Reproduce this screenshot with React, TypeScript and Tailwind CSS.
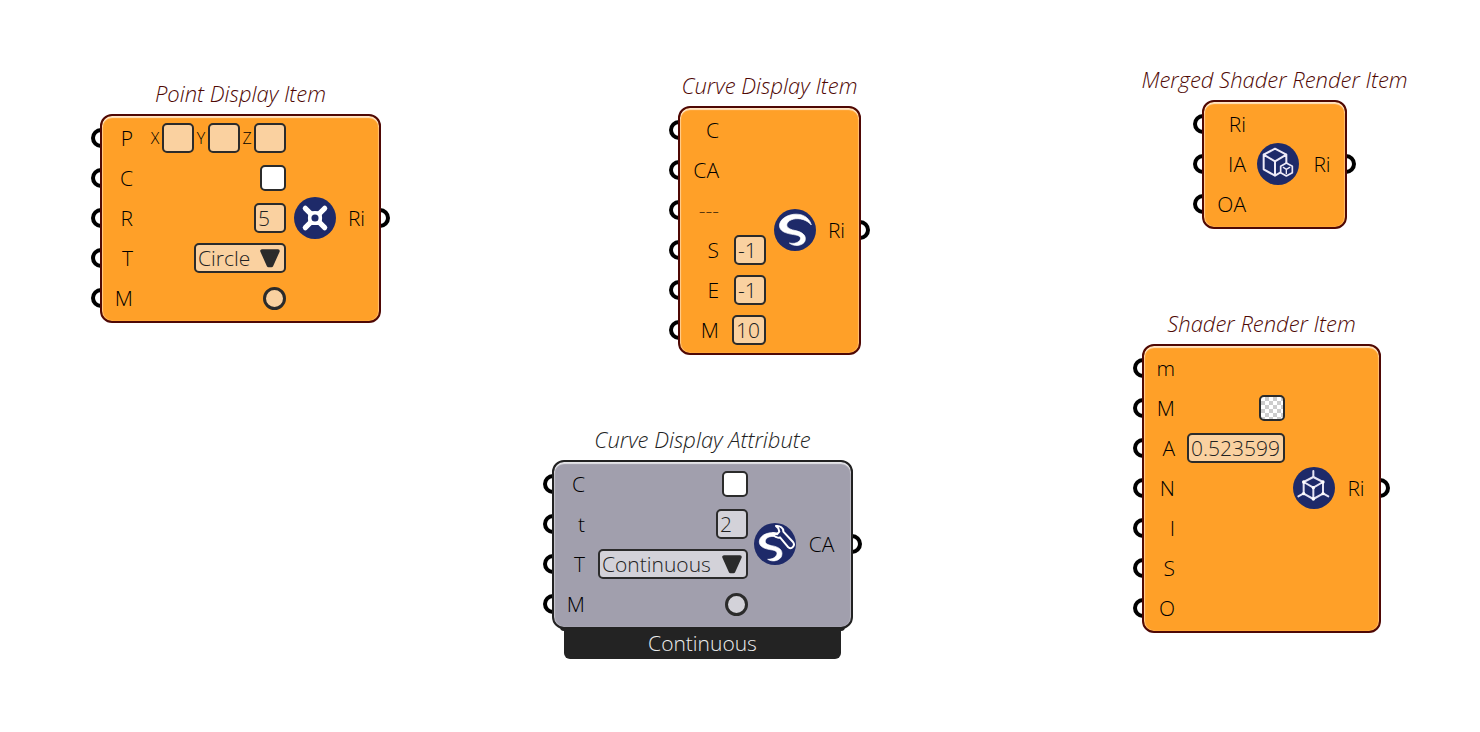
import type { ReactNode } from "react";

type Tone = "orange" | "slate";

const cardTone: Record<Tone, string> = {
  orange:
    "border-[#4f0804] bg-[#ffa028] shadow-[inset_0_2px_1px_rgba(255,255,255,0.7),inset_1px_0_1px_rgba(255,255,255,0.45),inset_-1px_0_1px_rgba(255,255,255,0.3)]",
  slate:
    "border-[#222222] bg-[#a19fad] shadow-[inset_0_2px_1px_rgba(255,255,255,0.7),inset_1px_0_1px_rgba(255,255,255,0.35),inset_-1px_0_1px_rgba(255,255,255,0.2)]",
};
const titleTone: Record<Tone, string> = { orange: "text-[#4f0804]", slate: "text-[#222222]" };
const fieldTone: Record<Tone, string> = { orange: "bg-[#fad1a0]", slate: "bg-[#d3d2d9]" };

const box = "rounded-[5px] border-2 border-[#2b2b2b] text-[#222222]";

function Port({ side }: { side: "left" | "right" }) {
  return (
    <span
      className={`absolute -z-10 size-5 rounded-full border-4 border-black bg-white ${
        side === "left" ? "-left-[11px]" : "-right-[11px]"
      }`}
    />
  );
}

function Row({ label, labelWidth, muted, children }: { label: string; labelWidth: string; muted?: boolean; children?: ReactNode }) {
  return (
    <div className="relative flex h-10 items-center">
      <Port side="left" />
      <span className={`shrink-0 text-right ${labelWidth} ${muted ? "text-black/70" : ""}`}>{label}</span>
      <div className="flex flex-1 items-center justify-end">{children}</div>
    </div>
  );
}

function TextField({ label, value, width, tone }: { label: string; value: string; width: string; tone: Tone }) {
  return (
    <input
      aria-label={label}
      defaultValue={value}
      className={`h-[30px] px-0.5 leading-6 outline-none ${box} ${fieldTone[tone]} ${width}`}
    />
  );
}

function AxisField({ axis }: { axis: string }) {
  return (
    <label className="flex items-center">
      <span className="w-3.5 text-center text-base">{axis}</span>
      <input className={`h-[30px] w-8 outline-none ${box} ${fieldTone.orange}`} />
    </label>
  );
}

function Swatch({ label, checker }: { label: string; checker?: boolean }) {
  return (
    <button
      type="button"
      aria-label={label}
      className={`size-[26px] ${box} ${
        checker
          ? "bg-[repeating-conic-gradient(#cccccc_0_25%,#ffffff_0_50%)] bg-size-[8px_8px]"
          : "bg-white"
      }`}
    />
  );
}

function Choice({ label, value, width, tone }: { label: string; value: string; width: string; tone: Tone }) {
  return (
    <div className={`relative ${width}`}>
      <select
        aria-label={label}
        defaultValue={value}
        className={`block h-[30px] w-full appearance-none pl-0.5 leading-6 outline-none ${box} ${fieldTone[tone]}`}
      >
        <option>{value}</option>
      </select>
      <svg viewBox="0 0 20 19" className="pointer-events-none absolute top-1.5 right-1.5 h-[19px] w-5" aria-hidden="true">
        <path d="M2 2H18L11.5 16.5H8.5Z" fill="#2b2b2b" stroke="#2b2b2b" strokeWidth="3.5" strokeLinejoin="round" />
      </svg>
    </div>
  );
}

function Toggle({ label, tone }: { label: string; tone: Tone }) {
  return (
    <input
      type="radio"
      aria-label={label}
      className={`size-[23px] appearance-none rounded-full border-3 border-[#2b2b2b] ${fieldTone[tone]}`}
    />
  );
}

interface NodeProps {
  title: string;
  tone?: Tone;
  place: string;
  rowsWidth: string;
  gap: string;
  icon: ReactNode;
  output: string;
  footer?: string;
  children: ReactNode;
}

function Node({ title, tone = "orange", place, rowsWidth, gap, icon, output, footer, children }: NodeProps) {
  return (
    <section className={`absolute isolate ${place}`}>
      <h2 className={`mb-2 flex h-[26px] items-center justify-center text-[22px] whitespace-nowrap italic ${titleTone[tone]}`}>{title}</h2>
      <div className={`flex items-center rounded-xl border-2 pt-0.5 pb-[3px] ${gap} ${cardTone[tone]}`}>
        <div className={`shrink-0 ${rowsWidth}`}>{children}</div>
        <div className="shrink-0">{icon}</div>
        <div className="relative flex flex-1 items-center justify-center self-stretch pr-2.5">
          {output}
          <Port side="right" />
        </div>
      </div>
      {footer && (
        <div className="relative -z-10 -mt-0.5 text-center text-[#ededed]">
          <div className="mx-2 h-1 rounded-b-sm bg-[#232323]" />
          <div className="mx-3 h-7 rounded-b-md bg-[#232323] leading-6">{footer}</div>
        </div>
      )}
    </section>
  );
}

const NAVY = "#1e2a69";

function PointIcon() {
  return (
    <svg viewBox="25 23 130 130" className="size-[42px]" aria-hidden="true">
      <circle cx="90" cy="88" r="65" fill={NAVY} />
      <path d="M60 58L120 118M120 58L60 118" stroke="#fff" strokeWidth="16" strokeLinecap="round" />
      <path d="M70 68Q90 64 110 68Q114 88 110 108Q90 112 70 108Q66 88 70 68Z" fill="#fff" />
      <circle cx="90" cy="88" r="11" fill={NAVY} />
    </svg>
  );
}

function CurveIcon() {
  return (
    <svg viewBox="344 2 126 126" className="size-[42px]" aria-hidden="true">
      <circle cx="407" cy="65" r="63" fill={NAVY} />
      <path
        d="M456 50C449 24 425 15 402 18C374 22 357 40 361 57C366 74 392 77 410 80C425 83 427 91 419 99C411 106 400 106 390 104C403 116 431 113 437 98C443 79 425 70 405 66C388 62 380 56 383 46C388 33 412 27 432 34C443 38 450 43 456 50Z"
        fill="#fff"
        stroke="#fff"
        strokeWidth="2"
        strokeLinejoin="round"
      />
    </svg>
  );
}

function CurveAttributeIcon() {
  return (
    <svg viewBox="25 20 126 126" className="size-[42px]" aria-hidden="true">
      <circle cx="88" cy="83" r="63" fill={NAVY} />
      <path
        d="M101 51C72 44 44 54 41 74C39 92 58 98 80 101C94 103 98 111 90 120C84 127 76 129 66 129C82 139 104 132 108 118C113 100 98 91 78 88C62 85 56 79 60 70C66 58 88 58 103 66Z"
        fill="#fff"
        stroke="#fff"
        strokeWidth="2"
      />
      <path
        d="M91 29C103 27 114 35 113 46L142 77C150 87 138 101 128 93L103 63C95 66 84 61 82 51L94 54L101 46L98 36Z"
        fill={NAVY}
        stroke="#fff"
        strokeWidth="6"
        strokeLinejoin="round"
      />
    </svg>
  );
}

function MergedIcon() {
  return (
    <svg viewBox="22 24 126 126" className="size-[42px]" aria-hidden="true">
      <circle cx="85" cy="87" r="63" fill={NAVY} />
      <g stroke="#eeeaf8" strokeLinejoin="round" strokeLinecap="round" fill={NAVY}>
        <path d="M76 41L110 59V102L76 122L42 103V59ZM42 59L76 79L110 59M76 79V122" strokeWidth="6" />
        <path d="M110 84L128 94V113L110 123L93 113V94Z" strokeWidth="5" />
        <path d="M101 97L110 103L120 97M110 103V116" strokeWidth="4" />
      </g>
    </svg>
  );
}

function ShaderIcon() {
  return (
    <svg viewBox="520 19 126 126" className="size-[42px]" aria-hidden="true">
      <circle cx="583" cy="82" r="63" fill={NAVY} />
      <g stroke="#e6e4f4" strokeLinejoin="round" strokeLinecap="round" fill="none">
        <path d="M581 49L610 64V99L581 115L552 99V64ZM552 64L581 81L610 64M581 81V115" strokeWidth="6" />
        <path d="M581 31V49M552 98L536 107M610 98L626 107" strokeWidth="6" />
      </g>
      <g fill="#fff">
        <circle cx="552" cy="64" r="5" />
        <circle cx="610" cy="64" r="5" />
        <circle cx="581" cy="81" r="5" />
        <circle cx="552" cy="99" r="5" />
        <circle cx="610" cy="99" r="5" />
        <circle cx="581" cy="115" r="5" />
      </g>
    </svg>
  );
}

export default function App() {
  return (
    <main className="relative min-h-screen w-full overflow-hidden bg-white font-['Open_Sans','Noto_Sans',sans-serif] text-[21px] leading-7 font-light text-black">
      <Node title="Point Display Item" place="left-[100px] top-[80px] w-[281px]" rowsWidth="w-[184px]" gap="gap-2" icon={<PointIcon />} output="Ri">
        <Row label="P" labelWidth="w-[31px]">
          <AxisField axis="X" />
          <AxisField axis="Y" />
          <AxisField axis="Z" />
        </Row>
        <Row label="C" labelWidth="w-[31px]">
          <Swatch label="Point colour" />
        </Row>
        <Row label="R" labelWidth="w-[31px]">
          <TextField label="Radius" value="5" width="w-8" tone="orange" />
        </Row>
        <Row label="T" labelWidth="w-[31px]">
          <Choice label="Point type" value="Circle" width="w-[92px]" tone="orange" />
        </Row>
        <Row label="M" labelWidth="w-[31px]">
          <Toggle label="Point mode" tone="orange" />
        </Row>
      </Node>

      <Node title="Curve Display Item" place="left-[678px] top-[72px] w-[183px]" rowsWidth="w-[86px]" gap="gap-2" icon={<CurveIcon />} output="Ri">
        <Row label="C" labelWidth="w-[39px]" />
        <Row label="CA" labelWidth="w-[39px]" />
        <Row label="---" labelWidth="w-[39px]" muted />
        <Row label="S" labelWidth="w-[39px]">
          <TextField label="Start" value="-1" width="w-8" tone="orange" />
        </Row>
        <Row label="E" labelWidth="w-[39px]">
          <TextField label="End" value="-1" width="w-8" tone="orange" />
        </Row>
        <Row label="M" labelWidth="w-[39px]">
          <TextField label="Mode" value="10" width="w-[34px]" tone="orange" />
        </Row>
      </Node>

      <Node
        title="Curve Display Attribute"
        tone="slate"
        place="left-[552px] top-[426px] w-[301px]"
        rowsWidth="w-[194px]"
        gap="gap-1.5"
        icon={<CurveAttributeIcon />}
        output="CA"
        footer="Continuous"
      >
        <Row label="C" labelWidth="w-[31px]">
          <Swatch label="Curve colour" />
        </Row>
        <Row label="t" labelWidth="w-[31px]">
          <TextField label="Thickness" value="2" width="w-8" tone="slate" />
        </Row>
        <Row label="T" labelWidth="w-[31px]">
          <Choice label="Curve type" value="Continuous" width="w-[150px]" tone="slate" />
        </Row>
        <Row label="M" labelWidth="w-[31px]">
          <Toggle label="Curve mode" tone="slate" />
        </Row>
      </Node>

      <Node title="Merged Shader Render Item" place="left-[1202px] top-[66px] w-[145px]" rowsWidth="w-[43px]" gap="gap-2.5" icon={<MergedIcon />} output="Ri">
        <Row label="Ri" labelWidth="w-[42px]" />
        <Row label="IA" labelWidth="w-[42px]" />
        <Row label="OA" labelWidth="w-[42px]" />
      </Node>

      <Node title="Shader Render Item" place="left-[1142px] top-[310px] w-[239px]" rowsWidth="w-[141px]" gap="gap-2" icon={<ShaderIcon />} output="Ri">
        <Row label="m" labelWidth="w-[31px]" />
        <Row label="M" labelWidth="w-[31px]">
          <Swatch label="Material" checker />
        </Row>
        <Row label="A" labelWidth="w-[31px]">
          <TextField label="Angle" value="0.523599" width="w-[98px]" tone="orange" />
        </Row>
        <Row label="N" labelWidth="w-[31px]" />
        <Row label="I" labelWidth="w-[31px]" />
        <Row label="S" labelWidth="w-[31px]" />
        <Row label="O" labelWidth="w-[31px]" />
      </Node>
    </main>
  );
}
